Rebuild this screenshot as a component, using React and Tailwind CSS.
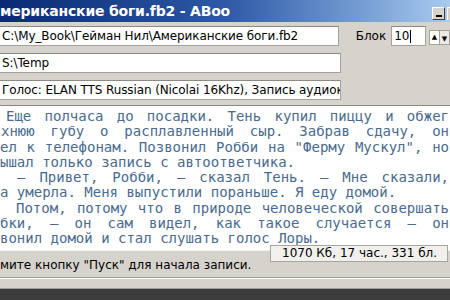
const UI_FONT = "font-['DejaVu_Sans',sans-serif]";

const LINES = [
  { text: 'Еще полчаса до посадки. Тень купил пиццу и обжег', pad: 'pl-[6px]', justify: true },
  { text: 'хнюю губу о расплавленный сыр. Забрав сдачу, он', pad: 'pl-[1px]', justify: true },
  { text: 'ел к телефонам. Позвонил Робби на "Ферму Мускул", но', pad: 'pl-[0px]', justify: true },
  { text: 'ышал только запись с автоответчика.', pad: 'pl-[0px]', justify: false },
  { text: '– Привет, Робби, – сказал Тень. – Мне сказали,', pad: 'pl-[17px]', justify: true },
  { text: 'а умерла. Меня выпустили пораньше. Я еду домой.', pad: 'pl-[0px]', justify: false },
  { text: 'Потом, потому что в природе человеческой совершать', pad: 'pl-[16px]', justify: true },
  { text: 'бки, – он сам видел, как такое случается – он', pad: 'pl-[0px]', justify: true },
  { text: 'вонил домой и стал слушать голос Лоры.', pad: 'pl-[0px]', justify: false },
];

const Field = ({ children, className = '' }) => (
  <div
    className={`h-[20px] -ml-[4px] w-[345px] bg-white border border-[#a5a29b] border-t-[#8d8a83] pl-[5px] leading-[18px] overflow-hidden whitespace-nowrap text-[12px] tracking-[-0.1px] text-black ${className}`}
  >
    {children}
  </div>
);

export default function App() {
  return (
    <div className={`w-[450px] h-[300px] bg-[#d6d3cc] overflow-hidden relative flex flex-col ${UI_FONT}`}>
      {/* title bar */}
      <div className="h-[22px] shrink-0 flex items-center bg-gradient-to-r from-[#0a2a73] via-[#2d59a6] to-[#a9cbef]">
        <span className="text-white font-bold text-[14px] leading-none whitespace-nowrap tracking-[-0.2px]">
          мериканские боги.fb2 - ABoo
        </span>
        <div className="ml-auto flex items-start gap-[2px] h-full pt-[7px]">
          <div className="w-[13px] h-[13px] bg-[#d6d3cc] border border-white border-r-[#404040] border-b-[#404040] flex items-end justify-center pb-[2px]">
            <div className="w-[6px] h-[2px] bg-black" />
          </div>
          <div className="w-[3px] h-[13px] bg-[#d6d3cc] border-l border-t border-white" />
        </div>
      </div>

      {/* form */}
      <div className="flex flex-col gap-[7px] pt-[4px]">
        <div className="flex items-start">
          <Field>C:\My_Book\Гейман Нил\Американские боги.fb2</Field>
          <span className="ml-[17px] mt-[2px] text-[12px] text-black leading-[16px]">Блок</span>
          <div className="ml-[5px] w-[35px] h-[20px] bg-white border border-[#a5a29b] border-t-[#8d8a83] pl-[2px] text-[12px] leading-[18px] text-black flex items-center">
            10<span className="w-[1px] h-[13px] bg-black ml-[1px]" />
          </div>
          <div className="ml-[3px] mt-[4px] flex">
            <div className="w-[11px] h-[15px] bg-white border border-[#a5a29b] flex items-center justify-center text-[7px] leading-none text-black">▲</div>
            <div className="w-[10px] h-[15px] bg-[#eceae4] border border-[#a5a29b] border-l-0 flex items-center justify-center pt-[3px] text-[7px] leading-none text-black">▼</div>
          </div>
        </div>
        <Field>S:\Temp</Field>
        <Field>Голос: ELAN TTS Russian (Nicolai 16Khz), Запись аудиокниги</Field>
      </div>

      {/* text area */}
      <div className="mt-[5px] h-[146px] shrink-0 bg-white border-t border-[#8d8a83] border-b border-b-[#f4f3ef] pt-[3px] font-['DejaVu_Sans_Mono',monospace] text-[14px] text-[#4a6b8e]">
        {LINES.map((l, i) => (
          <div
            key={i}
            className={`h-[15.3px] leading-[15.3px] whitespace-nowrap w-[449px] ${l.pad} ${l.justify ? 'text-justify [text-align-last:justify]' : ''}`}
          >
            {l.text}
          </div>
        ))}
      </div>

      {/* status */}
      <div className="h-[26px] shrink-0 flex items-center text-[12px] text-black whitespace-nowrap pt-[2px]">
        мите кнопку "Пуск" для начала записи.
      </div>
      <div className="border-t border-[#a09d96] border-b border-b-white h-[2px]" />
      <div className="h-[10px] border-b border-[#a09d96]" />
      <div className="flex-1 bg-[#3c3c3c]" />

      {/* size popup */}
      <div className="absolute left-[270px] top-[245px] w-[178px] h-[17px] bg-[#f1f0ec] border border-[#a8a59e] text-[12px] leading-[15px] text-black pl-[11px] whitespace-nowrap">
        1070 Кб, 17 час., 331 бл.
      </div>
    </div>
  );
}
